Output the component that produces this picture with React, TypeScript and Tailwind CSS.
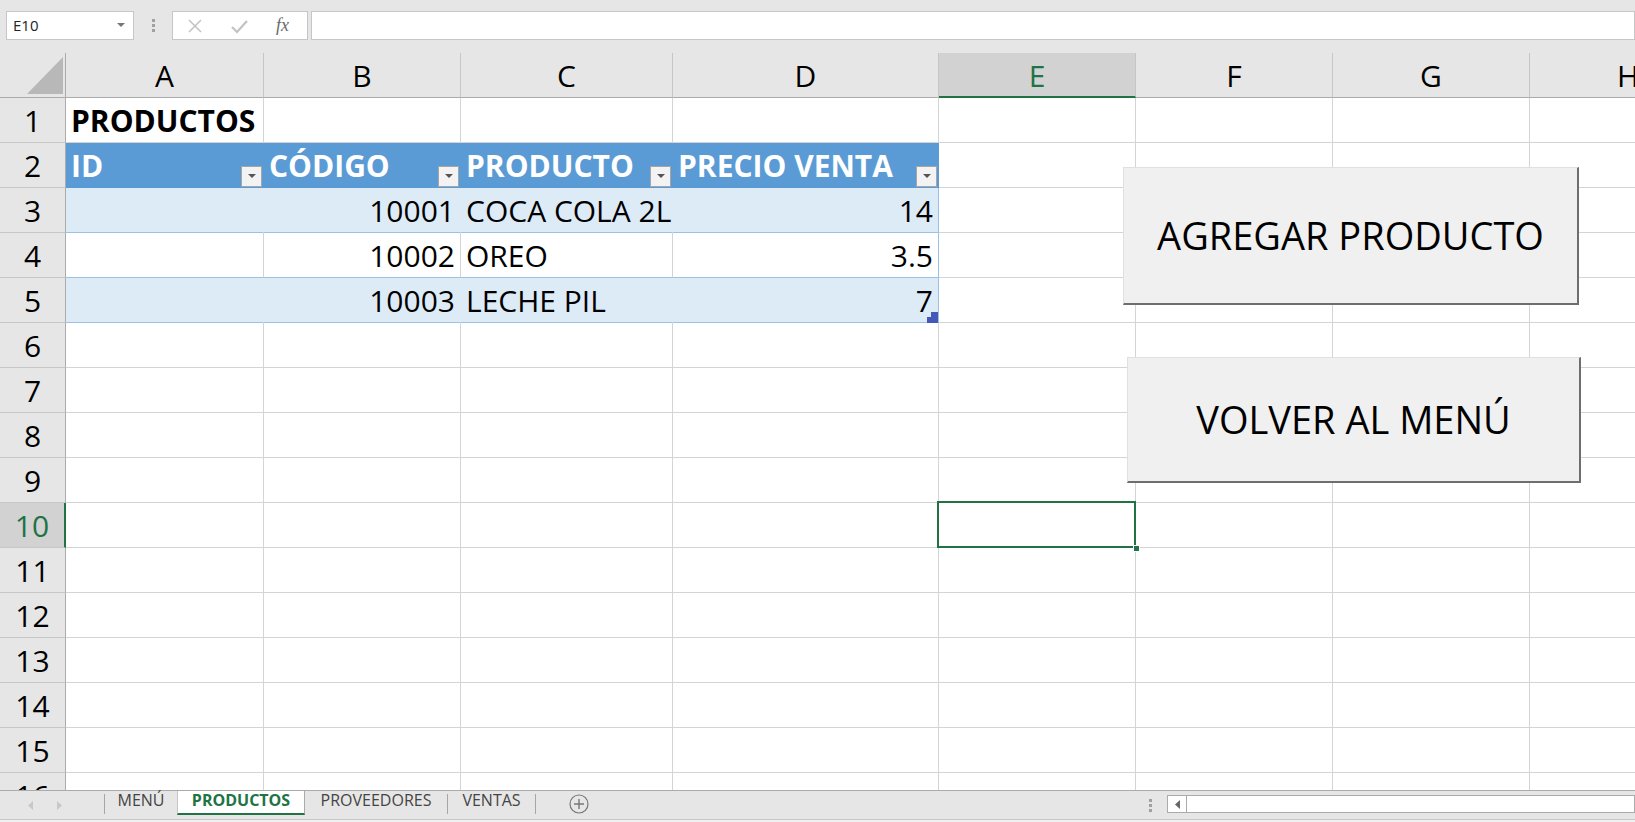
import React from 'react';

type Cell = { t?: string; right?: boolean; bold?: boolean };

const LETTERS = ['A', 'B', 'C', 'D', 'E', 'F', 'G', 'H'];
const ROWS = Array.from({ length: 16 }, (_, i) => i + 1);

const DATA: Record<number, Cell[]> = {
  1: [{ t: 'PRODUCTOS', bold: true }],
  2: [{ t: 'ID' }, { t: 'CÓDIGO' }, { t: 'PRODUCTO' }, { t: 'PRECIO VENTA' }],
  3: [{}, { t: '10001', right: true }, { t: 'COCA COLA 2L' }, { t: '14', right: true }],
  4: [{}, { t: '10002', right: true }, { t: 'OREO' }, { t: '3.5', right: true }],
  5: [{}, { t: '10003', right: true }, { t: 'LECHE PIL' }, { t: '7', right: true }],
};

// table lives in rows 2..5, columns A..D
const cellClass = (r: number, c: number) => {
  const inTable = r >= 2 && r <= 5 && c <= 3;
  if (!inTable) return 'bg-white border-r border-b border-r-[#d4d4d4] border-b-[#d4d4d4]';
  if (r === 2) return 'bg-[#5b9bd5] text-white font-bold border-r border-b border-r-[#5b9bd5] border-b-[#5b9bd5]';
  const band = r === 3 || r === 5;
  if (c === 3) {
    return band
      ? 'bg-[#ddebf7] border-r border-b border-r-[#9bc2e6] border-b-[#9bc2e6]'
      : 'bg-white border-r border-b border-r-[#9bc2e6] border-b-[#9bc2e6]';
  }
  return band
    ? 'bg-[#ddebf7] border-r border-b border-r-[#ddebf7] border-b-[#9bc2e6]'
    : 'bg-white border-r border-b border-r-[#d4d4d4] border-b-[#9bc2e6]';
};

const FilterButton = () => (
  <div className="absolute right-[1px] bottom-0 w-[21px] h-[21px] bg-[#f3f3f3] border border-[#a6a6a6] flex items-center justify-center">
    <svg width="8" height="5" viewBox="0 0 8 5">
      <polygon points="0,0 8,0 4,4" fill="#555" />
    </svg>
  </div>
);

const FormulaBar = () => (
  <div className="h-[53px] flex items-start pt-[11px] pl-[6px] bg-[#e6e6e6]">
    <div className="w-[128px] h-[29px] bg-white border border-[#c6c6c6] flex items-center pl-[6px] pr-[8px] text-[15px] text-[#222]">
      <span className="flex-1">E10</span>
      <svg width="8" height="5" viewBox="0 0 8 5">
        <polygon points="0,0 8,0 4,4" fill="#777" />
      </svg>
    </div>
    <div className="w-[38px] h-[29px] flex flex-col items-center justify-center gap-[2px]">
      <div className="w-[3px] h-[3px] bg-[#a0a0a0]" />
      <div className="w-[3px] h-[3px] bg-[#a0a0a0]" />
      <div className="w-[3px] h-[3px] bg-[#a0a0a0]" />
    </div>
    <div className="w-[136px] h-[29px] bg-white border border-[#c6c6c6] flex items-center pl-[15px]">
      <svg width="14" height="14" viewBox="0 0 14 14">
        <path d="M1 1 L13 13 M13 1 L1 13" stroke="#c2c2c2" strokeWidth="1.5" />
      </svg>
      <svg width="17" height="14" viewBox="0 0 17 14" className="ml-[29px] mt-[2px]">
        <path d="M1 7 L6 12 L16 1" stroke="#c2c2c2" strokeWidth="2.2" fill="none" />
      </svg>
      <span className="ml-[28px] font-['Liberation_Serif',serif] italic text-[18px] text-[#6a6a6a] leading-none -mt-[2px]">
        fx
      </span>
    </div>
    <div className="ml-[3px] flex-1 h-[29px] bg-white border border-[#c6c6c6]" />
  </div>
);

const Sheet = () => (
  <div className="relative h-[737px] overflow-hidden bg-white">
    <div className="grid w-max grid-cols-[66px_198px_197px_212px_266px_197px_197px_197px_197px] auto-rows-[45px] text-[30px] text-black">
      {/* corner */}
      <div className="relative bg-[#e6e6e6] border-r border-b border-r-[#ababab] border-b-[#ababab]">
        <svg width="66" height="45" viewBox="0 0 66 45" className="absolute left-0 top-0">
          <polygon points="27,41 63,41 63,4" fill="#b8b8b8" />
        </svg>
      </div>
      {LETTERS.map((l) => (
        <div
          key={l}
          className={
            l === 'E'
              ? 'bg-[#d2d2d2] border-r border-b-2 border-r-[#c6c6c6] border-b-[#217346] text-center text-[#217346] pt-[2px] leading-[42px]'
              : 'bg-[#e6e6e6] border-r border-b border-r-[#c6c6c6] border-b-[#ababab] text-center pt-[2px] leading-[42px]'
          }
        >
          {l}
        </div>
      ))}

      {ROWS.map((r) => (
        <React.Fragment key={r}>
          <div
            className={
              r === 10
                ? 'bg-[#d2d2d2] border-r-2 border-b border-r-[#217346] border-b-[#c6c6c6] text-center text-[#217346] pt-[2px] leading-[42px]'
                : 'bg-[#e6e6e6] border-r border-b border-r-[#ababab] border-b-[#c6c6c6] text-center pt-[2px] leading-[42px]'
            }
          >
            {r}
          </div>
          {LETTERS.map((l, c) => {
            const cell = DATA[r]?.[c];
            return (
              <div key={l} className={`relative whitespace-nowrap px-[5px] pt-[2px] leading-[42px] ${cellClass(r, c)}`}>
                {cell?.t && (
                  <div className={`${cell.right ? 'text-right' : 'text-left'} ${cell.bold ? 'font-bold' : ''}`}>{cell.t}</div>
                )}
                {r === 2 && c <= 3 && <FilterButton />}
                {r === 5 && c === 3 && (
                  <svg width="11" height="11" viewBox="0 0 11 11" className="absolute right-0 bottom-[-1px] z-10">
                    <polygon points="4,0 11,0 11,11 0,11 0,5 4,5" fill="#4458b8" />
                  </svg>
                )}
                {r === 10 && l === 'E' && (
                  <>
                    <div className="absolute left-[-2px] top-[-2px] w-[199px] h-[47px] border-2 border-[#217346] z-10" />
                    <div className="absolute right-[-5px] bottom-[-5px] w-[7px] h-[7px] bg-[#217346] border border-white z-10" />
                  </>
                )}
              </div>
            );
          })}
        </React.Fragment>
      ))}
    </div>

    {/* form buttons floating over the sheet */}
    <div className="absolute left-[1123px] top-[114px] w-[456px] h-[138px] bg-[#f0f0f0] border-t border-l border-r-2 border-b-2 border-t-[#e0e0e0] border-l-[#e0e0e0] border-r-[#6e6e6e] border-b-[#6e6e6e] flex items-center justify-center text-[38px] text-black">
      AGREGAR PRODUCTO
    </div>
    <div className="absolute left-[1127px] top-[304px] w-[454px] h-[126px] bg-[#f0f0f0] border-t border-l border-r-2 border-b-2 border-t-[#e0e0e0] border-l-[#e0e0e0] border-r-[#6e6e6e] border-b-[#6e6e6e] flex items-center justify-center text-[38px] text-black">
      VOLVER AL MENÚ
    </div>
  </div>
);

const Sep = () => <div className="w-px h-[20px] mt-[3px] bg-[#a6a6a6]" />;

const TabBar = () => (
  <div className="h-[32px] flex flex-col">
    <div className="h-[29px] border-t border-[#ababab] bg-[#e6e6e6] flex items-start text-[16px] text-[#444]">
      <div className="w-[104px] h-[28px] flex items-center pl-[28px] gap-[24px]">
        <svg width="5" height="9" viewBox="0 0 5 9">
          <polygon points="5,0 5,9 0,4.5" fill="#c8c8c8" />
        </svg>
        <svg width="5" height="9" viewBox="0 0 5 9">
          <polygon points="0,0 0,9 5,4.5" fill="#c8c8c8" />
        </svg>
      </div>
      <Sep />
      <div className="w-[72px] h-[24px] flex justify-center leading-[19px]">MENÚ</div>
      <div className="w-[128px] h-[24px] bg-white border-l border-r border-b-2 border-l-[#c6c6c6] border-r-[#ababab] border-b-[#217346] flex justify-center leading-[19px] font-bold text-[#217346]">
        PRODUCTOS
      </div>
      <div className="w-[142px] h-[24px] flex justify-center leading-[19px]">PROVEEDORES</div>
      <Sep />
      <div className="w-[87px] h-[24px] flex justify-center leading-[19px]">VENTAS</div>
      <Sep />
      <svg width="20" height="20" viewBox="0 0 20 20" className="ml-[33px] mt-[3px]">
        <circle cx="10" cy="10" r="9" fill="none" stroke="#777" strokeWidth="1.2" />
        <path d="M10 5 V15 M5 10 H15" stroke="#777" strokeWidth="1.4" />
      </svg>
      <div className="ml-auto w-[495px] h-[28px] flex items-start pl-[9px]">
        <div className="flex flex-col gap-[2px] mt-[8px]">
          <div className="w-[3px] h-[3px] bg-[#a0a0a0]" />
          <div className="w-[3px] h-[3px] bg-[#a0a0a0]" />
          <div className="w-[3px] h-[3px] bg-[#a0a0a0]" />
        </div>
        <div className="ml-[15px] mt-[4px] flex-1 h-[18px] bg-white border border-[#ababab] flex">
          <div className="w-[19px] h-full border-r border-[#ababab] flex items-center justify-center">
            <svg width="5" height="9" viewBox="0 0 5 9">
              <polygon points="5,0 5,9 0,4.5" fill="#666" />
            </svg>
          </div>
        </div>
      </div>
    </div>
    <div className="h-[3px] border-t border-[#c6c6c6] bg-[#f0f0f0]" />
  </div>
);

export default function App() {
  return (
    <div className="w-[1635px] h-[822px] overflow-hidden bg-[#e6e6e6] font-['Open_Sans',sans-serif] text-black">
      <FormulaBar />
      <Sheet />
      <TabBar />
    </div>
  );
}
